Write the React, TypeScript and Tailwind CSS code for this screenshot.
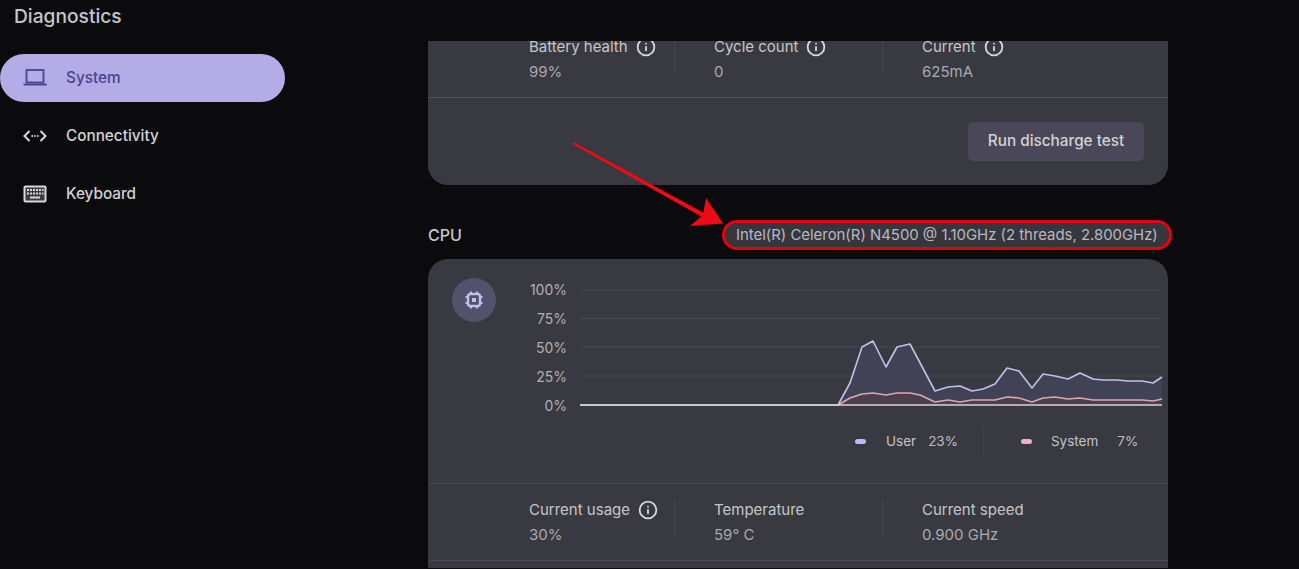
import { Info } from 'lucide-react';

const userLine =
  '580,405 838,405 850,383 862,347 873,341 886,367 897,347 910,344 935,391 948,387 960,386 972,391 983,389 995,384 1007,368 1019,371 1032,388 1043,374 1055,376 1068,379 1080,373 1093,379 1103,380 1117,380 1128,381 1142,381 1153,383 1162,377';
const systemLine =
  '838,405 850,398 862,394 873,393 886,395 897,393 910,393 920,395 935,402 948,400 960,402 972,400 995,400 1007,397 1019,398 1032,402 1043,398 1055,397 1068,399 1080,398 1093,400 1142,400 1153,401 1162,399';

function LaptopIcon() {
  return (
    <svg viewBox="0 0 24 20" className="w-6 h-5" fill="none">
      <rect x="3.5" y="2" width="17" height="12.5" stroke="#4c4390" strokeWidth="1.8" />
      <rect x="0.5" y="15.5" width="23" height="2" fill="#4c4390" />
    </svg>
  );
}

function ConnectivityIcon() {
  return (
    <svg viewBox="0 0 24 14" className="w-6 h-[14px]" fill="none" stroke="#d8d8da" strokeWidth="2">
      <path d="M6.5 2 1.5 7l5 5M17.5 2l5 5-5 5" />
      <path d="M8.5 7h1.4M11.3 7h1.4M14.1 7h1.4" />
    </svg>
  );
}

function KeyboardIcon() {
  return (
    <svg viewBox="0 0 24 18" className="w-6 h-[18px]" fill="none">
      <rect x="0.5" y="0.5" width="23" height="17" rx="2" fill="#d8d8da" />
      <rect x="2.5" y="2.5" width="19" height="13" fill="#3b3b40" />
      <path
        d="M4 4h2v2H4zM7 4h2v2H7zM10 4h2v2h-2zM13 4h2v2h-2zM16 4h2v2h-2zM19 4h1.5v2H19zM4 7.5h2v2H4zM7 7.5h2v2H7zM10 7.5h2v2h-2zM13 7.5h2v2h-2zM16 7.5h2v2h-2zM19 7.5h1.5v2H19zM7 11.5h10v2H7z"
        fill="#d8d8da"
      />
    </svg>
  );
}

function ChipIcon() {
  return (
    <svg viewBox="0 0 20 20" className="w-5 h-5" fill="none" stroke="#c3bdf0">
      <rect x="4" y="4" width="12" height="12" rx="2.5" strokeWidth="2.4" />
      <rect x="8" y="8" width="4" height="4" fill="#c3bdf0" stroke="none" />
      <path
        d="M7 1.5v2M13 1.5v2M7 16.5v2M13 16.5v2M1.5 7h2M1.5 13h2M16.5 7h2M16.5 13h2"
        strokeWidth="2"
      />
    </svg>
  );
}

function Stat({ label, value, info, width }: { label: string; value: string; info?: boolean; width: string }) {
  return (
    <div className={`${width} flex flex-col`}>
      <div className="flex items-center gap-[8px] h-5 text-[15px] text-[#c6c6ca] leading-5">
        {label}
        {info && <Info className="w-[20px] h-[20px] text-[#d8d8da]" strokeWidth={2.2} />}
      </div>
      <div className="mt-[5px] h-5 text-[15px] text-[#aaaaaf] leading-5">{value}</div>
    </div>
  );
}

function Divider() {
  return <div className="w-px h-[36px] bg-[#46464e] mr-[39px]" />;
}

export default function App() {
  return (
    <div className="relative flex w-[1299px] h-[569px] overflow-hidden bg-[#0b0b0d] font-['Inter','Liberation_Sans',sans-serif]">
      {/* sidebar */}
      <aside className="w-[428px] shrink-0">
        <h1 className="pl-[14px] pt-[4px] h-[54px] text-[19.2px] leading-6 font-medium text-[#c4c6ca]">Diagnostics</h1>
        <nav className="flex flex-col gap-[10px] w-[285px] text-[15.3px] font-medium">
          <div className="flex items-center h-[48px] rounded-full bg-[#b4ace6] pl-[23px] gap-[19px] text-[#4c4390]">
            <LaptopIcon />
            System
          </div>
          <div className="flex items-center h-[48px] pl-[23px] gap-[19px] text-[#d2d2d4]">
            <ConnectivityIcon />
            Connectivity
          </div>
          <div className="flex items-center h-[48px] pl-[23px] gap-[19px] text-[#d2d2d4]">
            <KeyboardIcon />
            Keyboard
          </div>
        </nav>
      </aside>

      {/* scrolled content, clipped below the title bar */}
      <main className="w-[744px] mt-[41px] h-[527px] overflow-hidden">
        <div className="-mt-[4px] w-[740px]">
          <section className="rounded-b-[20px] bg-[#393942] h-[148px]">
            <div className="flex h-[61px] pl-[101px] border-b border-[#52525b]">
              <Stat label="Battery health" value="99%" info width="w-[145px]" />
              <Divider />
              <Stat label="Cycle count" value="0" info width="w-[168px]" />
              <Divider />
              <Stat label="Current" value="625mA" info width="w-[140px]" />
            </div>
            <div className="flex justify-end pt-[24px] pr-[24px]">
              <button className="h-[39px] w-[176px] rounded-[5px] bg-[#4a4858] text-[15.3px] font-medium text-[#d2d2d6]">
                Run discharge test
              </button>
            </div>
          </section>

          <div className="flex items-center justify-between h-[74px] pt-[26px] text-[16px]">
            <span className="font-medium text-[#c9c9cb]">CPU</span>
            <span className="flex items-center -mr-[4px] h-[30px] w-[450px] pl-[11px] rounded-[15px] border-[3px] border-[#e8000f] bg-[#36363e] text-[14.9px] text-[#b9b9be] whitespace-nowrap">
              Intel(R) Celeron(R) N4500 @ 1.10GHz (2 threads, 2.800GHz)
            </span>
          </div>

          <section className="rounded-t-[20px] bg-[#393942] h-[320px]">
            <div className="flex h-[225px] border-b border-[#46464f]">
              <div className="w-[101px] pl-[24px] pt-[19px]">
                <div className="flex items-center justify-center w-11 h-11 rounded-full bg-[#54516a]">
                  <ChipIcon />
                </div>
              </div>
              <div className="flex-1">
                <div className="flex h-[158px]">
                  <div className="w-[38px] pt-[21px] flex flex-col gap-[9px] items-end text-[14px] leading-[20px] text-[#b0b0b5]">
                    <span>100%</span>
                    <span>75%</span>
                    <span>50%</span>
                    <span>25%</span>
                    <span>0%</span>
                  </div>
                  <svg viewBox="580 259 588 158" className="ml-[13px] w-[588px] h-[158px]" fill="none">
                    <path d="M580 290H1162M580 318.5H1162M580 347H1162M580 376H1162" stroke="#494952" strokeWidth="1" />
                    <polygon points={`${userLine} 1162,405`} fill="#424257" />
                    <polygon points={`${systemLine} 1162,405`} fill="#4d3e4b" />
                    <polyline points={userLine} stroke="#c5c0e8" strokeWidth="1.6" strokeLinejoin="round" />
                    <polyline points={systemLine} stroke="#d8a8b6" strokeWidth="1.6" strokeLinejoin="round" />
                    <path d="M580 405H1162" stroke="#d5d3de" strokeWidth="1.6" />
                  </svg>
                </div>
                <div className="flex items-center h-[36px] pt-[12px] pl-[326px] text-[13.5px] text-[#c4c4c8]">
                  <span className="w-[11px] h-[5px] rounded-full bg-[#c0baf0] mr-[20px]" />
                  <span className="mr-[12px]">User</span>
                  <span className="text-[#bcbcc2]">23%</span>
                  <div className="w-px h-[28px] bg-[#42424a] ml-[25px] mr-[37px]" />
                  <span className="w-[11px] h-[5px] rounded-full bg-[#e8b4c4] mr-[19px]" />
                  <span className="mr-[19px]">System</span>
                  <span className="text-[#bcbcc2]">7%</span>
                </div>
              </div>
            </div>
            <div className="flex pl-[101px] pt-[16px] h-[77px] border-b border-[#46464f]">
              <Stat label="Current usage" value="30%" info width="w-[145px]" />
              <Divider />
              <Stat label="Temperature" value="59° C" width="w-[168px]" />
              <Divider />
              <Stat label="Current speed" value="0.900 GHz" width="w-[140px]" />
            </div>
          </section>
        </div>
      </main>

      {/* red annotation arrow drawn over the page */}
      <svg viewBox="0 0 1299 569" className="absolute inset-0 w-[1299px] h-[569px] pointer-events-none">
        <polygon
          points="572.5,144 573.5,142 704,213 702,217"
          fill="#f00a14"
        />
        <polygon points="723,223.5 690,226 703,215 706,198" fill="#f00a14" />
      </svg>
    </div>
  );
}
